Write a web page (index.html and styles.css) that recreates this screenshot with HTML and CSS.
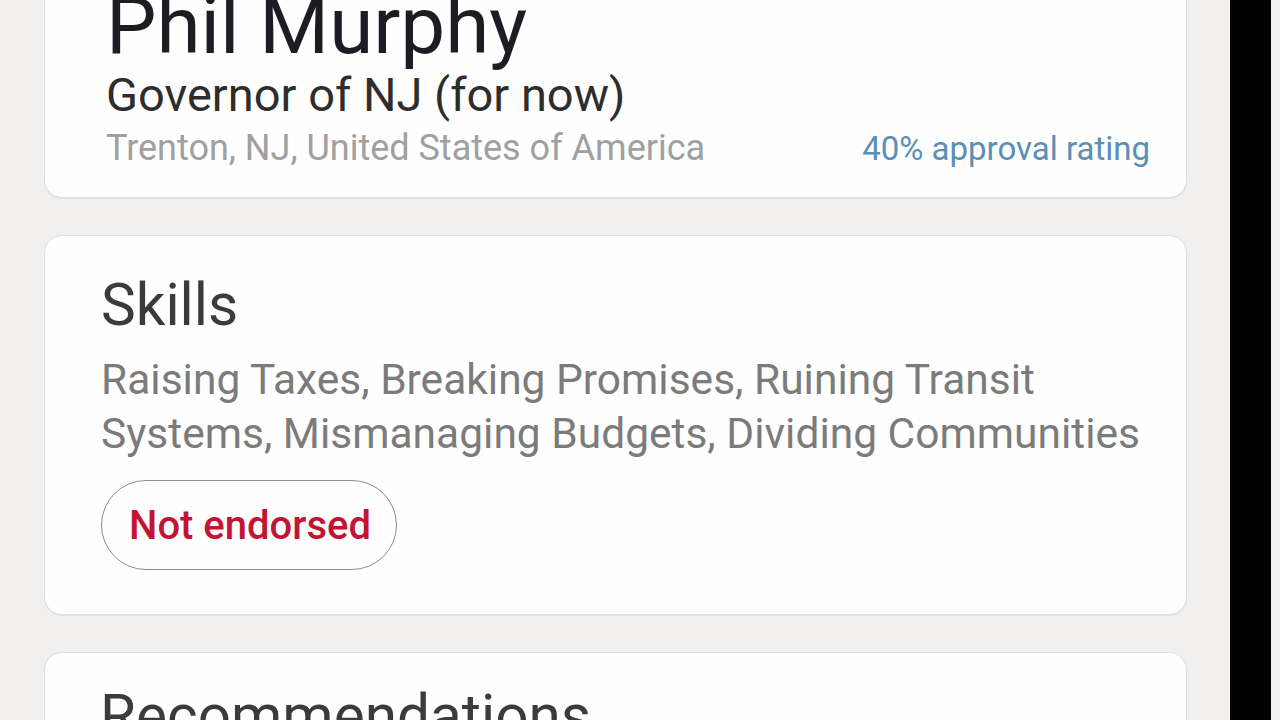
FILE: index.html
```html
<!DOCTYPE html>
<html lang="en">
<head>
<meta charset="utf-8">
<title>Phil Murphy</title>
<link rel="stylesheet" href="styles.css">
</head>
<body>
<div class="screen">
  <main class="feed">
    <section class="card profile">
      <h1 class="name">Phil Murphy</h1>
      <p class="title">Governor of NJ (for now)</p>
      <div class="meta">
        <span class="location">Trenton, NJ, United States of America</span>
        <span class="rating">40% approval rating</span>
      </div>
    </section>
    <section class="card skills">
      <h2 class="heading">Skills</h2>
      <p class="skill-list">Raising Taxes, Breaking Promises, Ruining Transit Systems, Mismanaging Budgets, Dividing Communities</p>
      <span class="pill">Not endorsed</span>
    </section>
    <section class="card recs">
      <h2 class="heading">Recommendations</h2>
    </section>
  </main>
  <div class="bezel"></div>
  <div class="edge"></div>
</div>
</body>
</html>
```

FILE: styles.css
```css
* { box-sizing: border-box; }
html, body {
  margin: 0;
  padding: 0;
  height: 720px;
  overflow: hidden;
  background: #f1f0ef;
  font-family: Roboto, "Noto Sans", "Liberation Sans", sans-serif;
}
.screen {
  display: flex;
  width: 1280px;
  height: 720px;
}
.feed {
  flex: 0 0 1230px;
  padding: 0 43px 0 44px;
  display: flex;
  flex-direction: column;
  gap: 37px;
  margin-top: -60px;
}
.bezel {
  flex: 0 0 41px;
  background: #000;
}
.edge {
  flex: 0 0 9px;
  background: #f2f2f2;
}
.card {
  background: #fefefe;
  border: 1px solid #dedede;
  border-radius: 18px;
  box-shadow: 0 1px 1px rgba(0,0,0,0.06);
}
.profile {
  padding: 45px 36px 28px 61px;
}
.name {
  margin: 0;
  font-size: 80px;
  line-height: 80px;
  font-weight: 400;
  color: #1b1d22;
}
.title {
  margin: 1px 0 0;
  font-size: 47px;
  line-height: 56px;
  color: #2d2d2d;
}
.meta {
  margin-top: 5px;
  display: flex;
  justify-content: space-between;
  align-items: baseline;
}
.location {
  font-size: 36px;
  line-height: 40px;
  color: #a0a0a0;
}
.rating {
  font-size: 33px;
  line-height: 40px;
  color: #5a8fb6;
}
.skills {
  padding: 35px 40px 44px 56px;
}
.heading {
  margin: 0;
  font-size: 58.5px;
  line-height: 68px;
  font-weight: 400;
  color: #3b3b3d;
}
.skill-list {
  margin: 14px 0 19px;
  font-size: 42.5px;
  line-height: 54px;
  color: #7b7b7b;
}
.pill {
  display: inline-flex;
  align-items: center;
  height: 90px;
  padding: 0 25px 0 27px;
  border: 1.5px solid #8d8d8d;
  border-radius: 45px;
  font-size: 40px;
  font-weight: 500;
  color: #c41334;
}
.recs {
  padding: 29px 40px 60px 55px;
  min-height: 200px;
}
```
